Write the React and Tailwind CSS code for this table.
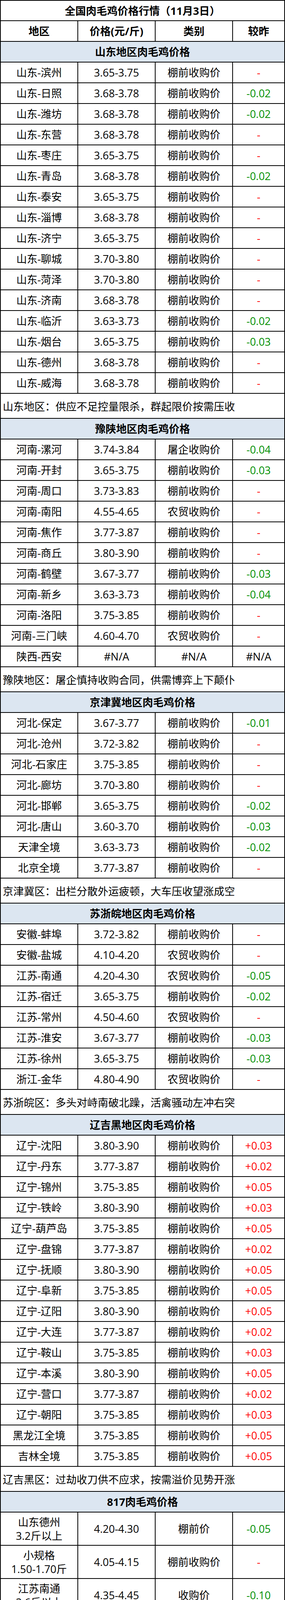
const sections = [
  {
    title: "山东地区肉毛鸡价格",
    rows: [
      ["山东-滨州", "3.65-3.75", "棚前收购价", "-"],
      ["山东-日照", "3.68-3.78", "棚前收购价", "-0.02"],
      ["山东-潍坊", "3.68-3.78", "棚前收购价", "-0.02"],
      ["山东-东营", "3.68-3.78", "棚前收购价", "-"],
      ["山东-枣庄", "3.65-3.75", "棚前收购价", "-"],
      ["山东-青岛", "3.68-3.78", "棚前收购价", "-0.02"],
      ["山东-泰安", "3.65-3.75", "棚前收购价", "-"],
      ["山东-淄博", "3.68-3.78", "棚前收购价", "-"],
      ["山东-济宁", "3.65-3.75", "棚前收购价", "-"],
      ["山东-聊城", "3.70-3.80", "棚前收购价", "-"],
      ["山东-菏泽", "3.70-3.80", "棚前收购价", "-"],
      ["山东-济南", "3.68-3.78", "棚前收购价", "-"],
      ["山东-临沂", "3.63-3.73", "棚前收购价", "-0.02"],
      ["山东-烟台", "3.65-3.75", "棚前收购价", "-0.03"],
      ["山东-德州", "3.68-3.78", "棚前收购价", "-"],
      ["山东-威海", "3.68-3.78", "棚前收购价", "-"],
    ],
    note: "山东地区：供应不足控量限杀，群起限价按需压收",
  },
  {
    title: "豫陕地区肉毛鸡价格",
    rows: [
      ["河南-漯河", "3.74-3.84", "屠企收购价", "-0.04"],
      ["河南-开封", "3.65-3.75", "棚前收购价", "-0.03"],
      ["河南-周口", "3.73-3.83", "棚前收购价", "-"],
      ["河南-南阳", "4.55-4.65", "农贸收购价", "-"],
      ["河南-焦作", "3.77-3.87", "棚前收购价", "-"],
      ["河南-商丘", "3.80-3.90", "棚前收购价", "-"],
      ["河南-鹤壁", "3.67-3.77", "棚前收购价", "-0.03"],
      ["河南-新乡", "3.63-3.73", "棚前收购价", "-0.04"],
      ["河南-洛阳", "3.75-3.85", "棚前收购价", "-"],
      ["河南-三门峡", "4.60-4.70", "农贸收购价", "-"],
      ["陕西-西安", "#N/A", "#N/A", "#N/A"],
    ],
    note: "豫陕地区：屠企慎持收购合同，供需博弈上下颠仆",
  },
  {
    title: "京津冀地区肉毛鸡价格",
    rows: [
      ["河北-保定", "3.67-3.77", "棚前收购价", "-0.01"],
      ["河北-沧州", "3.72-3.82", "棚前收购价", "-"],
      ["河北-石家庄", "3.75-3.85", "棚前收购价", "-"],
      ["河北-廊坊", "3.70-3.80", "棚前收购价", "-"],
      ["河北-邯郸", "3.65-3.75", "棚前收购价", "-0.02"],
      ["河北-唐山", "3.60-3.70", "棚前收购价", "-0.03"],
      ["天津全境", "3.63-3.73", "棚前收购价", "-0.02"],
      ["北京全境", "3.77-3.87", "棚前收购价", "-"],
    ],
    note: "京津冀区：出栏分散外运疲顿，大车压收望涨成空",
  },
  {
    title: "苏浙皖地区肉毛鸡价格",
    rows: [
      ["安徽-蚌埠", "3.72-3.82", "棚前收购价", "-"],
      ["安徽-盐城", "4.10-4.20", "农贸收购价", "-"],
      ["江苏-南通", "4.20-4.30", "农贸收购价", "-0.05"],
      ["江苏-宿迁", "3.65-3.75", "棚前收购价", "-0.02"],
      ["江苏-常州", "4.50-4.60", "农贸收购价", "-"],
      ["江苏-淮安", "3.67-3.77", "棚前收购价", "-0.03"],
      ["江苏-徐州", "3.65-3.75", "棚前收购价", "-0.03"],
      ["浙江-金华", "4.80-4.90", "农贸收购价", "-"],
    ],
    note: "苏浙皖区：多头对峙南破北躁，活禽骚动左冲右突",
  },
  {
    title: "辽吉黑地区肉毛鸡价格",
    rows: [
      ["辽宁-沈阳", "3.80-3.90", "棚前收购价", "+0.03"],
      ["辽宁-丹东", "3.77-3.87", "棚前收购价", "+0.02"],
      ["辽宁-锦州", "3.75-3.85", "棚前收购价", "+0.05"],
      ["辽宁-铁岭", "3.80-3.90", "棚前收购价", "+0.03"],
      ["辽宁-葫芦岛", "3.75-3.85", "棚前收购价", "+0.05"],
      ["辽宁-盘锦", "3.77-3.87", "棚前收购价", "+0.02"],
      ["辽宁-抚顺", "3.80-3.90", "棚前收购价", "+0.05"],
      ["辽宁-阜新", "3.75-3.85", "棚前收购价", "+0.05"],
      ["辽宁-辽阳", "3.80-3.90", "棚前收购价", "+0.05"],
      ["辽宁-大连", "3.77-3.87", "棚前收购价", "+0.02"],
      ["辽宁-鞍山", "3.75-3.85", "棚前收购价", "+0.03"],
      ["辽宁-本溪", "3.80-3.90", "棚前收购价", "+0.05"],
      ["辽宁-营口", "3.77-3.87", "棚前收购价", "+0.02"],
      ["辽宁-朝阳", "3.75-3.85", "棚前收购价", "+0.03"],
      ["黑龙江全境", "3.75-3.85", "棚前收购价", "+0.05"],
      ["吉林全境", "3.75-3.85", "棚前收购价", "+0.05"],
    ],
    note: "辽吉黑区：过劫收刀供不应求，按需溢价见势开涨",
  },
];

const rows817 = [
  ["山东德州", "3.2斤以上", "4.20-4.30", "棚前价", "-0.05"],
  ["小规格", "1.50-1.70斤", "4.05-4.15", "棚前收购价", "-"],
  ["江苏南通", "3.6斤以上", "4.35-4.45", "收购价", "-0.10"],
  ["山东聊城", "2.8-3.2斤", "4.15-4.25", "棚前收购价", "-0.05"],
  ["浙江金华", "3.6斤以上", "4.80-4.90", "农贸收购价", "-"],
  ["河南濮阳", "3.2-3.5斤", "4.40-4.50", "棚前收购价", "-"],
  ["河南新乡", "3.2-3.5斤", "4.30-4.40", "棚前收购价", "-"],
  ["河南开封", "3.2-3.5斤", "4.45-4.55", "棚前收购价", "-"],
  ["津冀地区", "2.8-3.2斤", "#N/A", "#N/A", "#N/A"],
];

// colour of the 较昨 column
function changeColor(v) {
  if (v === "#N/A") return "text-black";
  if (v.startsWith("-0")) return "text-[#008f00]";
  return "text-[#ff0000]";
}

const cell = "bg-white flex items-center justify-center text-center";

function SectionHead({ children }) {
  return <div className="col-span-4 h-[51px] bg-[#dce6f1] flex items-center justify-center font-bold">{children}</div>;
}

function Note({ children }) {
  return <div className="col-span-4 h-[62px] bg-white flex items-center pl-[5px] pt-[2px]">{children}</div>;
}

export default function App() {
  return (
    <div className="w-[729px] bg-black p-[2px] grid grid-cols-[196px_196px_196px_131px] auto-rows-min gap-[2px] text-black text-[27px] leading-none font-['Open_Sans','Noto_Sans_CJK_SC',sans-serif]">
      <div className="col-span-4 h-[50px] bg-white flex items-center justify-center font-bold">全国肉毛鸡价格行情（11月3日）</div>
      {["地区", "价格(元/斤)", "类别", "较昨"].map(h => (
        <div key={h} className={`${cell} h-[51px] font-bold`}>{h}</div>
      ))}

      {sections.map(s => (
        <Section key={s.title} s={s} />
      ))}

      <SectionHead>817肉毛鸡价格</SectionHead>
      {rows817.map(r => (
        <Row817 key={r[0]} r={r} />
      ))}
      <Note>肉杂817鸡市场棚前行情：控势限价，高举高打</Note>
    </div>
  );
}

function Section({ s }) {
  return (
    <>
      <SectionHead>{s.title}</SectionHead>
      {s.rows.map(r => (
        <div key={r[0]} className="contents">
          <div className={`${cell} h-[51px]`}>{r[0]}</div>
          <div className={`${cell} h-[51px]`}>{r[1]}</div>
          <div className={`${cell} h-[51px]`}>{r[2]}</div>
          <div className={`${cell} h-[51px] ${changeColor(r[3])}`}>{r[3]}</div>
        </div>
      ))}
      <Note>{s.note}</Note>
    </>
  );
}

function Row817({ r }) {
  return (
    <div className="contents">
      <div className={`${cell} h-[83px] flex-col leading-[35px]`}>
        <span>{r[0]}</span>
        <span>{r[1]}</span>
      </div>
      <div className={`${cell} h-[83px]`}>{r[2]}</div>
      <div className={`${cell} h-[83px]`}>{r[3]}</div>
      <div className={`${cell} h-[83px] ${changeColor(r[4])}`}>{r[4]}</div>
    </div>
  );
}
